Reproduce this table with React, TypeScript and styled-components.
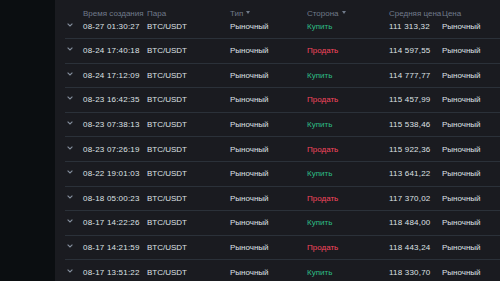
import React from "react";
import styled, { createGlobalStyle } from "styled-components";

const Global = createGlobalStyle`
  html, body { margin: 0; padding: 0; background: #181a20; }
  body { width: 500px; height: 281px; overflow: hidden; font-family: "Liberation Sans", Arial, sans-serif; }
  #root { height: 281px; }
`;

const Page = styled.div`
  display: flex;
  height: 281px;
  width: 500px;
  overflow: hidden;
`;

const Sidebar = styled.div`
  width: 55px;
  flex: none;
  background: #0b0e11;
`;

const Main = styled.div`
  flex: 1;
  background: #1a1b20;
  padding-left: 10px;
  overflow: hidden;
`;

const cols = "18px 64px 83px 77px 82px 53px 1fr";

const HeaderRow = styled.div`
  display: grid;
  grid-template-columns: ${cols};
  height: 14.4px;
  box-sizing: border-box;
  padding-top: 8px;
`;

const HeadCell = styled.div`
  font-size: 8px;
  line-height: 11px;
  color: #707a8a;
  white-space: nowrap;
  display: flex;
  align-items: center;
  gap: 3px;
`;

const SortArrow = styled.span`
  width: 0;
  height: 0;
  border-left: 2px solid transparent;
  border-right: 2px solid transparent;
  border-top: 3px solid #707a8a;
  margin-top: -2px;
`;

const Row = styled.div`
  display: grid;
  grid-template-columns: ${cols};
  height: 24.6px;
  box-sizing: border-box;
  border-bottom: 1px solid #2b3139;
  align-items: center;
`;

const Cell = styled.div<{ $tone?: "buy" | "sell"; $tight?: boolean }>`
  font-size: 8px;
  line-height: 11px;
  letter-spacing: ${(p) => (p.$tight ? "0" : "0.2px")};
  white-space: nowrap;
  color: ${(p) => (p.$tone === "buy" ? "#2ebd85" : p.$tone === "sell" ? "#f6465d" : "#dfe1e5")};
`;

const ChevronCell = styled.div`
  display: flex;
  padding-left: 2px;
  margin-top: -3px;
`;

const Chevron = () => (
  <svg width="6" height="4" viewBox="0 0 6 4">
    <path d="M0.6 0.6 L3 3 L5.4 0.6" fill="none" stroke="#848e9c" strokeWidth="1.1" />
  </svg>
);

type Order = { time: string; side: "buy" | "sell"; price: string };

const orders: Order[] = [
  { time: "08-27 01:30:27", side: "buy", price: "111 313,32" },
  { time: "08-24 17:40:18", side: "sell", price: "114 597,55" },
  { time: "08-24 17:12:09", side: "buy", price: "114 777,77" },
  { time: "08-23 16:42:35", side: "sell", price: "115 457,99" },
  { time: "08-23 07:38:13", side: "buy", price: "115 538,46" },
  { time: "08-23 07:26:19", side: "sell", price: "115 922,36" },
  { time: "08-22 19:01:03", side: "buy", price: "113 641,22" },
  { time: "08-18 05:00:23", side: "sell", price: "117 370,02" },
  { time: "08-17 14:22:26", side: "buy", price: "118 484,00" },
  { time: "08-17 14:21:59", side: "sell", price: "118 443,24" },
  { time: "08-17 13:51:22", side: "buy", price: "118 330,70" },
];

export default function App() {
  return (
    <>
      <Global />
      <Page>
        <Sidebar />
        <Main>
          <HeaderRow>
            <HeadCell />
            <HeadCell>Время создания</HeadCell>
            <HeadCell>Пара</HeadCell>
            <HeadCell>
              Тип <SortArrow />
            </HeadCell>
            <HeadCell>
              Сторона <SortArrow />
            </HeadCell>
            <HeadCell>Средняя цена</HeadCell>
            <HeadCell>Цена</HeadCell>
          </HeaderRow>
          {orders.map((o) => (
            <Row key={o.time}>
              <ChevronCell>
                <Chevron />
              </ChevronCell>
              <Cell>{o.time}</Cell>
              <Cell $tight>BTC/USDT</Cell>
              <Cell $tight>Рыночный</Cell>
              <Cell $tone={o.side} $tight>
                {o.side === "buy" ? "Купить" : "Продать"}
              </Cell>
              <Cell>{o.price}</Cell>
              <Cell $tight>Рыночный</Cell>
            </Row>
          ))}
        </Main>
      </Page>
    </>
  );
}
